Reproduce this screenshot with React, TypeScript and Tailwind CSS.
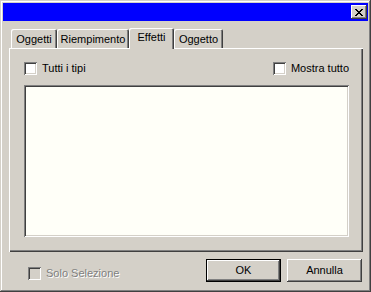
import { useState } from "react";

const raised =
  "shadow-[inset_-1px_-1px_#404040,inset_1px_1px_#ffffff,inset_-2px_-2px_#808080,inset_2px_2px_#d4d0c8]";
const sunken =
  "shadow-[inset_1px_1px_#808080,inset_-1px_-1px_#ffffff,inset_2px_2px_#404040,inset_-2px_-2px_#d4d0c8]";

function Check({ label, disabled }: { label: string; disabled?: boolean }) {
  const [on, setOn] = useState(false);
  return (
    <label className="flex items-center gap-[5px] select-none">
      <span
        onClick={() => !disabled && setOn(!on)}
        className={`w-[13px] h-[13px] flex items-center justify-center ${sunken} ${
          disabled ? "bg-[#d4d0c8]" : "bg-white"
        }`}
      >
        {on && <span className="text-[10px] leading-none">✓</span>}
      </span>
      <span
        className={
          disabled
            ? "text-[#808080] [text-shadow:1px_1px_#ffffff]"
            : "text-black"
        }
      >
        {label}
      </span>
    </label>
  );
}

const tabs = [
  { name: "Oggetti", w: "w-[46px]" },
  { name: "Riempimento", w: "w-[72px]" },
  { name: "Effetti", w: "w-[45px]" },
  { name: "Oggetto", w: "w-[49px]" },
];

export default function App() {
  const [active, setActive] = useState(2);
  return (
    <div
      className={`w-[371px] h-[292px] bg-[#d4d0c8] p-[3px] flex flex-col text-[11px] font-['Liberation_Sans',Arial,sans-serif] shadow-[inset_-1px_-1px_#404040,inset_1px_1px_#d4d0c8,inset_-2px_-2px_#808080,inset_2px_2px_#ffffff]`}
    >
      {/* title bar */}
      <div className="h-[18px] bg-[#0000ff] flex items-center justify-end pr-[1px]">
        <button
          className={`w-[16px] h-[14px] bg-[#d4d0c8] flex items-center justify-center ${raised}`}
        >
          <svg width="8" height="7" viewBox="0 0 8 7">
            <path
              d="M0 0h2v1h1v1h2V1h1V0h2v1H7v1H6v1H5v1h1v1h1v1h1v1H6V6H5V5H3v1H2v1H0V6h1V5h1V4h1V3H2V2H1V1H0z"
              fill="#000"
            />
          </svg>
        </button>
      </div>

      {/* tabs */}
      <div className="mt-[7px] ml-[6px] mr-[5px] flex flex-col">
        <div className="flex h-[20px] items-end pl-[2px] relative z-10">
          {tabs.map((t, i) => (
            <button
              key={t.name}
              onClick={() => setActive(i)}
              className={`${t.w} text-center rounded-t-[2px] bg-[#d4d0c8] shadow-[inset_1px_1px_#ffffff,inset_-1px_0_#404040,inset_-2px_0_#808080] ${
                i === active
                  ? "h-[21px] -mb-[1px] pt-[1px] pb-[3px]"
                  : "h-[19px] pt-[2px]"
              } leading-[15px]`}
            >
              {t.name}
            </button>
          ))}
        </div>
        <div
          className={`h-[204px] flex flex-col pl-[15px] pr-[14px] pt-[14px] pb-[15px] shadow-[inset_1px_1px_#ffffff,inset_-1px_-1px_#404040,inset_-2px_-2px_#808080]`}
        >
          <div className="flex justify-between h-[13px] items-center">
            <Check label="Tutti i tipi" />
            <Check label="Mostra tutto" />
          </div>
          <div className={`mt-[10px] flex-1 bg-[#fffff8] ${sunken}`} />
        </div>
      </div>

      {/* footer */}
      <div className="flex items-center mt-[7px] pl-[25px] pr-[6px]">
        <div className="mt-[6px]">
          <Check label="Solo Selezione" disabled />
        </div>
        <div className="ml-auto flex gap-[6px]">
          <button className="w-[75px] h-[23px] border border-black bg-[#d4d0c8] shadow-[inset_-1px_-1px_#404040,inset_1px_1px_#ffffff,inset_-2px_-2px_#808080]">
            OK
          </button>
          <button className={`w-[75px] h-[23px] bg-[#d4d0c8] ${raised}`}>
            Annulla
          </button>
        </div>
      </div>
    </div>
  );
}
